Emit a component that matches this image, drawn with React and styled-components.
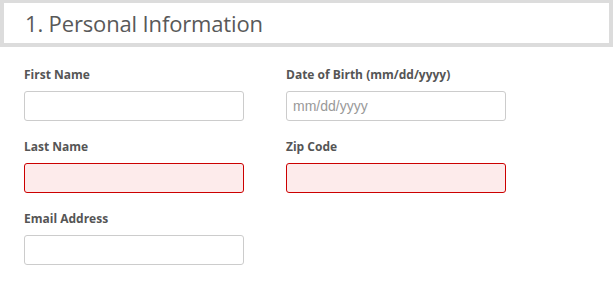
import React from 'react';
import styled, { createGlobalStyle } from 'styled-components';

const GlobalStyle = createGlobalStyle`
    body {
        margin: 0;
        background: #fff;
        font-family: 'Open Sans', 'Liberation Sans', sans-serif;
    }
`;

const fields = [
    { label: 'First Name' },
    { label: 'Date of Birth (mm/dd/yyyy)', placeholder: 'mm/dd/yyyy' },
    { label: 'Last Name', error: true },
    { label: 'Zip Code', error: true },
    { label: 'Email Address' },
];

const App = () => {
    return (
        <Page>
            <GlobalStyle />
            <Header>
                <Title>1. Personal Information</Title>
            </Header>
            <Form>
                {fields.map((f) => (
                    <Field key={f.label}>
                        <Label>{f.label}</Label>
                        <Input type="text" placeholder={f.placeholder} $error={f.error} />
                    </Field>
                ))}
            </Form>
        </Page>
    );
};

export default App;

// Styled Components
const Page = styled.div`
    width: 614px;
`;

const Header = styled.div`
    width: 613px;
    box-sizing: border-box;
    height: 47px;
    border: 4px solid #dcdcdc;
    border-top-width: 3px;
    background: #fff;
    display: flex;
    align-items: center;
    padding-left: 21px;
`;

const Title = styled.h1`
    margin: 0;
    font-size: 22px;
    font-weight: 400;
    color: #595959;
    letter-spacing: -0.15px;
`;

const Form = styled.div`
    display: grid;
    grid-template-columns: 220px 220px;
    column-gap: 42px;
    row-gap: 18px;
    padding: 20px 24px 0;
`;

const Field = styled.div`
    display: flex;
    flex-direction: column;
    gap: 8px;
`;

const Label = styled.label`
    font-size: 12px;
    font-weight: 700;
    line-height: 16px;
    color: #555;
`;

const Input = styled.input`
    box-sizing: border-box;
    width: 220px;
    height: 30px;
    border: 1px solid ${(p) => (p.$error ? '#cc0000' : '#cccccc')};
    background: ${(p) => (p.$error ? '#fdebeb' : '#fff')};
    border-radius: 3px;
    padding: 0 6px;
    font-family: 'Liberation Sans', Arial, sans-serif;
    font-size: 14px;
    color: #333;
    outline: none;

    &::placeholder {
        color: #999;
    }
`;
